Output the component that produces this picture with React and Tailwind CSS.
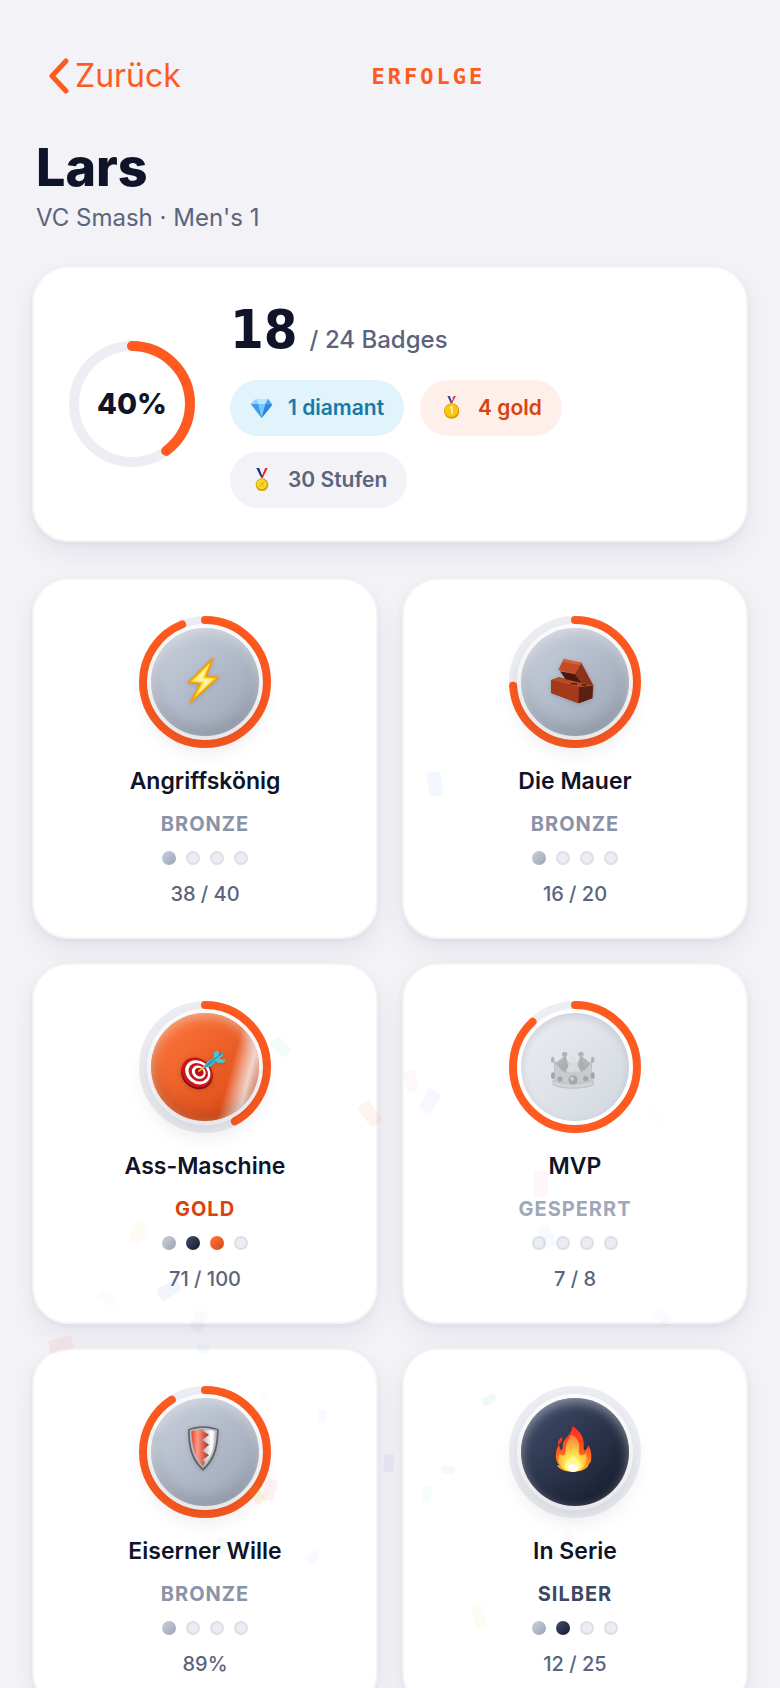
import clsx from "clsx";

const tiers = {
    bronze: {
        label: "Bronze",
        text: "text-[#8a93a8]",
        disc: "bg-linear-135 from-[#cbd1de] to-[#9aa4b5]",
    },
    silver: {
        label: "Silber",
        text: "text-[#3b4763]",
        disc: "bg-linear-135 from-[#44506e] to-[#151b2d]",
    },
    gold: {
        label: "Gold",
        text: "text-[#d9430d]",
        disc: "bg-linear-135 from-[#ff7a3d] to-[#d9430d]",
    },
    locked: {
        label: "Gesperrt",
        text: "text-[#9fa8ba]",
        disc: "bg-linear-135 from-[#eceef1] to-[#d2d7e0]",
    },
};

const badges = [
    { id: "attack", name: "Angriffskönig", tier: "bronze", steps: ["bronze"], progress: 94, count: "38 / 40", Icon: BoltIcon },
    { id: "block", name: "Die Mauer", tier: "bronze", steps: ["bronze"], progress: 74, count: "16 / 20", Icon: BrickIcon },
    { id: "ace", name: "Ass-Maschine", tier: "gold", steps: ["bronze", "silver", "gold"], progress: 42, count: "71 / 100", Icon: TargetIcon },
    { id: "mvp", name: "MVP", tier: "locked", steps: [], progress: 88, count: "7 / 8", Icon: CrownIcon },
    { id: "will", name: "Eiserner Wille", tier: "bronze", steps: ["bronze"], progress: 91, count: "89%", Icon: ShieldIcon },
    { id: "streak", name: "In Serie", tier: "silver", steps: ["bronze", "silver"], progress: 0, count: "12 / 25", Icon: FlameIcon },
];

// cx, cy, width, height, rotation, colour, opacity
const confetti = [
    [435, 784, 14, 24, -7, "#6b9bff", 0.08],
    [281, 1047, 12, 20, -45, "#14b8a6", 0.06],
    [370, 1114, 14, 25, -38, "#ff5a1f", 0.07],
    [139, 1233, 13, 21, 32, "#fbbf24", 0.06],
    [169, 1290, 13, 23, 60, "#3b82f6", 0.08],
    [107, 1298, 12, 21, -65, "#6366f1", 0.02],
    [199, 1321, 12, 21, 25, "#6366f1", 0.04],
    [61, 1345, 14, 24, 75, "#ef4444", 0.07],
    [203, 1349, 12, 9, 0, "#14b8a6", 0.04],
    [411, 1081, 12, 21, -10, "#ef4444", 0.04],
    [430, 1101, 14, 23, 30, "#6366f1", 0.05],
    [656, 1117, 12, 18, -55, "#ef4444", 0.01],
    [541, 1184, 14, 26, 0, "#ec4899", 0.05],
    [547, 1237, 13, 23, -20, "#3b82f6", 0.04],
    [663, 1317, 10, 19, -45, "#6366f1", 0.03],
    [265, 1398, 8, 13, 20, "#3b82f6", 0.02],
    [322, 1416, 8, 13, 15, "#3b82f6", 0.04],
    [389, 1463, 10, 18, 5, "#6366f1", 0.08],
    [270, 1490, 12, 21, 15, "#ef4444", 0.07],
    [257, 1495, 11, 18, -30, "#eab308", 0.12],
    [154, 1435, 10, 14, -30, "#10b981", 0.06],
    [223, 1546, 9, 16, -12, "#10b981", 0.06],
    [313, 1557, 8, 14, 42, "#3b82f6", 0.04],
    [489, 1400, 8, 15, 62, "#14b8a6", 0.07],
    [448, 1470, 8, 14, -78, "#10b981", 0.05],
    [427, 1494, 10, 18, 10, "#14b8a6", 0.04],
    [479, 1616, 11, 22, -16, "#fbbf24", 0.06],
    [568, 1538, 11, 11, 0, "#ec4899", 0.03],
];

function Confetti() {
    return (
        <svg className="pointer-events-none absolute top-0 left-0" width="780" height="1688" viewBox="0 0 780 1688" aria-hidden="true">
            {confetti.map(([cx, cy, w, h, angle, color, opacity]) => (
                <rect
                    key={`${cx}-${cy}`}
                    x={cx - w / 2}
                    y={cy - h / 2}
                    width={w}
                    height={h}
                    rx="3"
                    fill={color}
                    opacity={opacity}
                    transform={`rotate(${angle} ${cx} ${cy})`}
                />
            ))}
        </svg>
    );
}

function Ring({ size, stroke, value, className }) {
    const r = (size - stroke) / 2;
    const c = size / 2;

    return (
        <svg className={className} width={size} height={size} viewBox={`0 0 ${size} ${size}`} fill="none" strokeWidth={stroke} aria-hidden="true">
            <circle cx={c} cy={c} r={r} stroke="#edeef3" />
            {value > 0 && (
                <circle
                    cx={c}
                    cy={c}
                    r={r}
                    stroke="#ff5a1f"
                    strokeLinecap="round"
                    pathLength="100"
                    strokeDasharray={`${value} 100`}
                    transform={`rotate(-90 ${c} ${c})`}
                />
            )}
        </svg>
    );
}

/* Badge icons, all on a 144 grid */

function Icon({ children, className }) {
    return (
        <svg className={clsx("relative size-12 overflow-visible", className)} viewBox="0 0 144 144" aria-hidden="true">
            {children}
        </svg>
    );
}

function BoltIcon() {
    return (
        <Icon className="drop-shadow-sm">
            <path d="M95 2 22 74l36 3-30 57 84-76-37-3z" fill="#ffd21f" stroke="#f59a0b" strokeWidth="5" strokeLinejoin="round" />
            <path d="M84 20 37 69l31 2-21 41 49-49-31-3z" fill="#fff4a8" stroke="#ffe53b" strokeWidth="3" />
        </Icon>
    );
}

function BrickIcon() {
    return (
        <Icon className="drop-shadow-sm">
            <path d="m0 67 24-9 103 27-3 35-41 16L1 105z" fill="#6d2514" />
            <path d="m0 67 84 19-1 50L1 105z" fill="#a33a1c" />
            <path d="m84 86 40-3v38l-41 15z" fill="#5c1f12" />
            <path d="m0 67 24-9 100 25-40 4z" fill="#b94b28" />
            <path d="m27 40 45 8 22 28-50-12z" fill="#4d170d" />
            <path d="m38 3 53 11-20 35-49-13z" fill="#c24c28" />
            <path d="m91 14 37 70-34-8-23-27z" fill="#8e3219" />
            <path d="m38 3 53 11-5 8-50-11z" fill="#d4603a" />
            <path d="m60 77 18 1M92 80l14 1" stroke="#4d170d" strokeWidth="4" />
        </Icon>
    );
}

function TargetIcon() {
    return (
        <Icon className="drop-shadow-sm">
            <g transform="rotate(38 47 89)">
                <ellipse cx="50" cy="92" rx="50" ry="43" fill="#7f0f14" />
                <ellipse cx="47" cy="88" rx="49" ry="42" fill="#c9151b" />
                <ellipse cx="49" cy="86" rx="40" ry="34" fill="#fff" />
                <ellipse cx="50" cy="85" rx="31" ry="26" fill="#c9151b" />
                <ellipse cx="51" cy="84" rx="22" ry="19" fill="#fff" />
                <ellipse cx="52" cy="83" rx="14" ry="12" fill="#b31217" />
            </g>
            <path d="m54 84 18-14" stroke="#e8b923" strokeWidth="6" strokeLinecap="round" />
            <path d="M68 74c4-14 16-25 34-30l4 8c-9 16-21 24-38 22z" fill="#35b7cc" />
            <path d="m97 45 2-17 11-7 6 17 9-11 1 11-12 9 21 3-8 10-18-1z" fill="#4cc3d6" />
            <path d="m99 49 25-18M76 69l22-18" stroke="#1d7f94" strokeWidth="3" />
        </Icon>
    );
}

function CrownIcon() {
    return (
        <Icon className="opacity-80">
            <path d="M8 50 32 98l10-62 24 54 24-54 12 62 22-48-4 76H12z" fill="#a9abae" />
            <path d="M12 52c6 10 12 18 20 14l10-28c8 20 14 24 24 26 10-2 18-8 24-26l10 28c8 4 14-4 20-14l4 58c0 20-116 20-116 0z" fill="#c3c5c8" />
            <path d="M14 60c14 20 30 38 42 22L42 38M118 60c-14 20-30 36-42 22l14-44" fill="#8f9194" opacity=".7" />
            <path d="M66 40 44 86h46z" fill="#d6d7da" />
            <path d="M6 112c30 14 88 14 120 0v14c-30 13-90 13-120 0z" fill="#cfd0d3" stroke="#a5a7aa" strokeWidth="2" />
            <g fill="#a6a8ab">
                <circle cx="41" cy="34" r="8" />
                <circle cx="90" cy="34" r="8" />
                <ellipse cx="5" cy="50" rx="5" ry="9" />
                <ellipse cx="125" cy="50" rx="5" ry="9" />
            </g>
            <circle cx="66" cy="48" r="10" fill="#dfe0e2" />
            <g fill="#96989b">
                <circle cx="66" cy="111" r="14" />
                <circle cx="27" cy="108" r="8" />
                <circle cx="104" cy="107" r="8" />
                <ellipse cx="6" cy="98" rx="6" ry="10" />
                <ellipse cx="125" cy="98" rx="6" ry="10" />
            </g>
            <circle cx="63" cy="107" r="6" fill="#c9cacd" />
        </Icon>
    );
}

function ShieldIcon() {
    return (
        <Icon className="drop-shadow-sm">
            <defs>
                <linearGradient id="shieldRed" x1="0" x2="1">
                    <stop offset="0" stopColor="#e4452f" />
                    <stop offset=".35" stopColor="#ff9a86" />
                    <stop offset="1" stopColor="#b3261b" />
                </linearGradient>
                <linearGradient id="shieldWhite" x1="0" x2="1">
                    <stop offset="0" stopColor="#aeb1b5" />
                    <stop offset=".7" stopColor="#ffffff" />
                    <stop offset="1" stopColor="#d7d9dc" />
                </linearGradient>
            </defs>
            <path d="M67-5c16 0 32 3 46 9-2 50-6 88-47 125C26 92 22 54 21 4c14-6 30-9 46-9z" fill="#5f6265" />
            <path d="M67-1c14 0 28 3 41 7-2 46-7 82-42 115C32 88 27 52 26 6c13-4 27-7 41-7z" fill="#b9bcbf" />
            <path d="M67 4c12 0 24 2 35 6-2 44-8 76-36 104z" fill="url(#shieldWhite)" />
            <path d="M67 4C54 4 42 6 31 10c2 44 9 78 35 106l6-14-8-6 20-14-20-14 20-18-20-14 20-16-20-12z" fill="url(#shieldRed)" />
        </Icon>
    );
}

function FlameIcon() {
    return (
        <Icon>
            <defs>
                <linearGradient id="flameOuter" x1="0" x2="0" y1="0" y2="1">
                    <stop offset="0" stopColor="#ff2d1c" />
                    <stop offset=".55" stopColor="#ff5a1c" />
                    <stop offset="1" stopColor="#ffb41c" />
                </linearGradient>
                <radialGradient id="flameCore" cx=".5" cy=".85" r=".75">
                    <stop offset="0" stopColor="#fffde0" />
                    <stop offset=".35" stopColor="#ffec4f" />
                    <stop offset="1" stopColor="#ff8a3b" />
                </radialGradient>
            </defs>
            <path d="M64-6c22 14 36 32 34 60 0 6 0 12 2 14 6-2 10-8 12-16 10 16 10 34 8 46-1 6-6 8-8 14-2 10-22 20-46 20-26 0-44-10-48-20h8c-16-14-14-42-2-64 2 8 2 14 6 18 4 0 6-6 5-16C36 30 62 24 64-6z" fill="url(#flameOuter)" />
            <path d="M33 26c2 12-2 18-12 24-2-10 4-18 12-24z" fill="#ff3b1c" />
            <path d="M62 20c18 10 24 24 22 42-2 10 0 18 6 20 6 0 10-2 16-8 4 30-4 56-40 56-34 0-50-26-40-54 4 6 8 8 12 6 12-6-2-34 24-62z" fill="url(#flameCore)" />
            <path d="M66 84c10 10 26 18 22 36-4 12-40 14-46 0-4-16 14-24 24-36z" fill="#fff79a" />
            <ellipse cx="66" cy="120" rx="16" ry="12" fill="#fffef0" />
        </Icon>
    );
}

/* Pill icons, on a 72 grid */

function DiamondIcon() {
    return (
        <svg className="size-6" viewBox="0 0 72 72" aria-hidden="true">
            <path d="M19 9h35l13 17-32 40L3 24z" fill="#53aef5" />
            <path d="M3 24 19 9l6 15z" fill="#8fd3ff" />
            <path d="M19 9h35l-8 16-21-1z" fill="#b8e6ff" />
            <path d="m54 9 13 17-21-1z" fill="#4aa3ea" />
            <path d="m3 24 22 0 10 42z" fill="#3f9bef" />
            <path d="m25 24 21 1-11 41z" fill="#7cc8fb" />
            <path d="m46 25 21 1-32 40z" fill="#2f86d8" />
        </svg>
    );
}

function FirstPlaceIcon() {
    return (
        <svg className="size-6" viewBox="0 0 72 72" aria-hidden="true">
            <path d="M22 0h8l8 20-6 2z" fill="#3d4ba8" />
            <path d="M48 0h-7L30 22h6z" fill="#e03a46" />
            <path d="m30 0 4 0 4 10-2 5z" fill="#e9e9f2" />
            <circle cx="35" cy="45" r="23" fill="#d79a06" />
            <circle cx="34" cy="43" r="20" fill="#fac70e" />
            <path d="m29 37 7-4v22" fill="none" stroke="#fff1a8" strokeWidth="5" />
        </svg>
    );
}

function MedalIcon() {
    return (
        <svg className="size-6" viewBox="0 0 72 72" aria-hidden="true">
            <path d="M19 0h9l11 26-5 4z" fill="#1d2f86" />
            <path d="M53 0h-8L33 28l5 3z" fill="#e3262e" />
            <path d="m28 0 5 0 6 16-3 5zM45 0l-4 0-3 10 2 3z" fill="#f4f4f8" />
            <circle cx="36" cy="50" r="19" fill="#d6a20c" />
            <circle cx="35" cy="49" r="15" fill="#f9d92b" />
            <path d="m26 56 18-15M30 43l12 13" stroke="#d9aa12" strokeWidth="3" />
        </svg>
    );
}

function Pill({ icon, className, children }) {
    return (
        <li className={clsx("flex h-14 items-center gap-[14px] rounded-full px-5 text-[21px] font-semibold", className)}>
            {icon}
            <span>{children}</span>
        </li>
    );
}

function Summary() {
    return (
        <section className="flex items-center gap-[34px] rounded-[36px] border-2 border-[#f4f4f5] bg-white px-[34px] py-8 shadow-[0_12px_28px_rgba(20,20,50,0.06),0_2px_6px_rgba(20,20,50,0.05)]">
            <div className="relative flex size-32 shrink-0 items-center justify-center">
                <Ring size={126} stroke={10} value={40} />
                <span className="absolute text-[29px] font-extrabold text-[#0f1428]">40%</span>
            </div>

            <div className="flex flex-col gap-5">
                <p className="flex items-baseline gap-3 leading-15">
                    <span className="font-['DejaVu_Sans_Condensed','DejaVu_Sans',sans-serif] text-[54px] font-bold text-[#0f1428]">18</span>
                    <span className="text-2xl leading-8 font-medium text-[#5b647d]">/ 24 Badges</span>
                </p>

                <ul className="flex flex-wrap gap-4">
                    <Pill icon={<DiamondIcon />} className="bg-[#e1f3fb] text-[#167aa8]">1 diamant</Pill>
                    <Pill icon={<FirstPlaceIcon />} className="bg-[#ffefeb] text-[#d9430d]">4 gold</Pill>
                    <Pill icon={<MedalIcon />} className="bg-[#f2f2f7] text-[#5b647d]">30 Stufen</Pill>
                </ul>
            </div>
        </section>
    );
}

function BadgeCard({ badge }) {
    const { name, tier, steps, progress, count, Icon } = badge;
    const style = tiers[tier];

    return (
        <li className="flex flex-col items-center rounded-[36px] border-2 border-[#f4f4f5] bg-white pt-9 pb-[29px] shadow-[0_12px_28px_rgba(20,20,50,0.06),0_2px_6px_rgba(20,20,50,0.05)]">
            <div className="relative flex size-33 items-center justify-center">
                <Ring size={132} stroke={8} value={progress} className="absolute inset-0" />

                <div
                    className={clsx(
                        "relative flex size-27 items-center justify-center overflow-hidden rounded-full",
                        style.disc
                    )}
                >
                    {tier === "gold" && (
                        <div className="absolute inset-0 bg-[linear-gradient(105deg,transparent_69%,rgba(255,255,255,0.8)_84%,transparent_96%)]" />
                    )}
                    <Icon />
                </div>

                <div
                    className={clsx(
                        "absolute size-27 rounded-full",
                        tier === "locked"
                            ? "shadow-[inset_0_3px_8px_rgba(20,20,50,0.12)]"
                            : "shadow-[inset_0_4px_12px_rgba(255,255,255,0.45),inset_0_-6px_16px_rgba(0,0,0,0.18),0_10px_24px_rgba(20,20,50,0.14)]"
                    )}
                />
            </div>

            <h2 className="mt-[17px] text-[23px] leading-8 font-semibold text-[#0f1428]">{name}</h2>

            <p className={clsx("mt-[13px] text-xl leading-7 font-bold tracking-[1px] uppercase", style.text)}>{style.label}</p>

            <div className="mt-[13px] flex gap-[10px]">
                {[0, 1, 2, 3].map((i) => (
                    <span
                        key={i}
                        className={clsx(
                            "size-[14px] rounded-full",
                            steps[i] ? tiers[steps[i]].disc : "border-2 border-[#dcdfe8] bg-[#ecedf2]"
                        )}
                    />
                ))}
            </div>

            <p className="mt-[15px] text-xl leading-7 font-medium text-[#5b647d]">{count}</p>
        </li>
    );
}

function App() {
    return (
        <div className="h-screen overflow-y-auto bg-[#f2f2f7] font-['Inter',sans-serif] [scrollbar-width:none]">
            <main className="relative px-8 pt-11 pb-8">

                {/* Header */}
                <header className="flex h-16 items-center justify-between">
                    <button type="button" className="flex items-center gap-[6px] px-4 text-[32px] text-[#ff5a1f]">
                        <svg width="21" height="36" viewBox="0 0 21 36" fill="none" stroke="currentColor" strokeWidth="5" strokeLinecap="round" strokeLinejoin="round" aria-hidden="true">
                            <path d="M18 3 4 18l14 15" />
                        </svg>
                        Zurück
                    </button>

                    <span className="font-['DejaVu_Sans_Mono',monospace] text-[22px] font-bold tracking-[3px] text-[#ff5a1f] uppercase">
                        Erfolge
                    </span>

                    <div className="w-22" />
                </header>

                {/* Player */}
                <div className="mt-8 mb-[30px] px-1">
                    <h1 className="text-[52px] leading-14 font-extrabold text-[#0f1428]">Lars</h1>
                    <p className="mt-1 text-2xl leading-9 text-[#5b647d]">VC Smash · Men's 1</p>
                </div>

                <Summary />

                {/* Badges */}
                <ul className="mt-9 grid grid-cols-2 gap-6">
                    {badges.map((badge) => (
                        <BadgeCard key={badge.id} badge={badge} />
                    ))}
                </ul>

                <Confetti />
            </main>
        </div>
    );
}

export default App;
